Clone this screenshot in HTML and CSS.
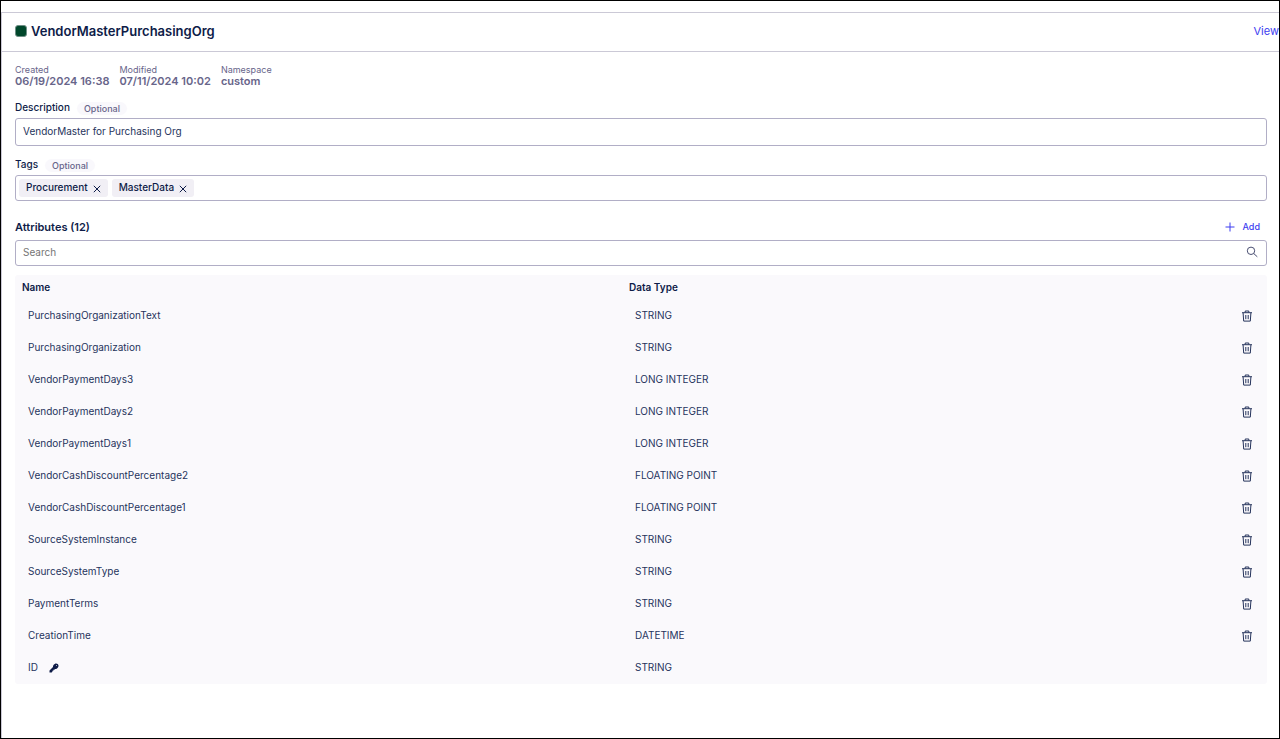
FILE: index.html
```html
<!DOCTYPE html>
<html lang="en">
<head>
<meta charset="utf-8">
<title>VendorMasterPurchasingOrg</title>
<link rel="stylesheet" href="styles.css">
</head>
<body>
<svg class="sprite" aria-hidden="true">
  <symbol id="trash" viewBox="0 0 12 12"><path d="M1 2.700h10M4.200 2.500V1h3.600v1.500M2.100 3l.6 8.100h6.600l.6-8.100M4.800 5v4.200M7.200 5v4.200"/></symbol>
  <symbol id="cross" viewBox="0 0 8 8"><path d="M.8.8l6.400 6.400M7.200.8L.8 7.200"/></symbol>
</svg>
<main class="panel">
  <header class="topbar">
    <span class="swatch"></span>
    <h1 class="title">VendorMasterPurchasingOrg</h1>
    <a class="view" href="#">View</a>
  </header>
  <div class="content">
    <dl class="meta">
      <div><dt>Created</dt><dd>06/19/2024 16:38</dd></div>
      <div><dt>Modified</dt><dd>07/11/2024 10:02</dd></div>
      <div><dt>Namespace</dt><dd>custom</dd></div>
    </dl>
    <div class="field-head"><label for="description">Description</label><span class="optional">Optional</span></div>
    <input class="box description" id="description" type="text" value="VendorMaster for Purchasing Org">
    <div class="field-head"><label for="tags">Tags</label><span class="optional">Optional</span></div>
    <div class="box tags">
      <span class="tag">Procurement<button class="remove" type="button" aria-label="Remove Procurement"><svg><use href="#cross"/></svg></button></span>
      <span class="tag">MasterData<button class="remove" type="button" aria-label="Remove MasterData"><svg><use href="#cross"/></svg></button></span>
      <input class="tag-input" id="tags" type="text">
    </div>
    <div class="attributes-head">
      <h2 class="subtitle">Attributes (12)</h2>
      <button class="add" type="button"><svg viewBox="0 0 10 10"><path d="M5 .5v9M.5 5h9"/></svg>Add</button>
    </div>
    <div class="box search">
      <input type="search" placeholder="Search" aria-label="Search attributes">
      <svg viewBox="0 0 12 12"><circle cx="5" cy="4.800" r="3.700"/><path d="M7.700 7.500l3.600 3.300"/></svg>
    </div>
    <table class="attributes">
      <thead><tr><th>Name</th><th>Data Type</th><th class="action"></th></tr></thead>
      <tbody>
        <tr><td>PurchasingOrganizationText</td><td>STRING</td><td><button class="delete" type="button" aria-label="Delete"><svg><use href="#trash"/></svg></button></td></tr>
        <tr><td>PurchasingOrganization</td><td>STRING</td><td><button class="delete" type="button" aria-label="Delete"><svg><use href="#trash"/></svg></button></td></tr>
        <tr><td>VendorPaymentDays3</td><td>LONG INTEGER</td><td><button class="delete" type="button" aria-label="Delete"><svg><use href="#trash"/></svg></button></td></tr>
        <tr><td>VendorPaymentDays2</td><td>LONG INTEGER</td><td><button class="delete" type="button" aria-label="Delete"><svg><use href="#trash"/></svg></button></td></tr>
        <tr><td>VendorPaymentDays1</td><td>LONG INTEGER</td><td><button class="delete" type="button" aria-label="Delete"><svg><use href="#trash"/></svg></button></td></tr>
        <tr><td>VendorCashDiscountPercentage2</td><td>FLOATING POINT</td><td><button class="delete" type="button" aria-label="Delete"><svg><use href="#trash"/></svg></button></td></tr>
        <tr><td>VendorCashDiscountPercentage1</td><td>FLOATING POINT</td><td><button class="delete" type="button" aria-label="Delete"><svg><use href="#trash"/></svg></button></td></tr>
        <tr><td>SourceSystemInstance</td><td>STRING</td><td><button class="delete" type="button" aria-label="Delete"><svg><use href="#trash"/></svg></button></td></tr>
        <tr><td>SourceSystemType</td><td>STRING</td><td><button class="delete" type="button" aria-label="Delete"><svg><use href="#trash"/></svg></button></td></tr>
        <tr><td>PaymentTerms</td><td>STRING</td><td><button class="delete" type="button" aria-label="Delete"><svg><use href="#trash"/></svg></button></td></tr>
        <tr><td>CreationTime</td><td>DATETIME</td><td><button class="delete" type="button" aria-label="Delete"><svg><use href="#trash"/></svg></button></td></tr>
        <tr><td>ID<svg class="key" viewBox="0 0 10 10"><path fill-rule="evenodd" d="M5.800.9C7.200 0 9.300.7 9.500 2.500 9.700 4.400 8 6.200 6.200 5.900L5.300 6.800H4.400V7.800H3.400V8.700L2.600 9.400H.5V7.500L4 4.100C3.800 2.700 4.600 1.500 5.800.9ZM7.400 2.100a.4.4 0 1 0 .1 0Z"/></svg></td><td>STRING</td><td></td></tr>
      </tbody>
    </table>
  </div>
</main>
</body>
</html>
```
FILE: styles.css
```css
* { box-sizing: border-box; }
body {
  margin: 0;
  min-height: 100vh;
  display: flex;
  padding-top: 11px;
  border: 1px solid #000;
  background: #fff;
  color: #0e1c48;
  font: 10px/14px Inter, sans-serif;
  overflow-x: hidden;
}
button, input { font: inherit; color: inherit; border: 0; padding: 0; background: none; }
input { outline: 0; min-width: 0; }
button { cursor: pointer; }
svg { fill: none; stroke: currentColor; }
.sprite { position: absolute; width: 0; height: 0; }
.panel { flex: 1; min-width: 0; border-top: 1px solid #cbc9d6; border-left: 1px solid #cbc9d6; }
.topbar {
  display: flex;
  align-items: center;
  height: 39px;
  padding: 0 0 2px 13px;
  border-bottom: 1px solid #cbc9d6;
}
.swatch { width: 12px; height: 12px; border: 1px solid #6f8f86; border-radius: 3px; background: #00472b; }
.title { margin: 0 0 0 4px; font-size: 13px; line-height: 18px; font-weight: 600; }
.view { margin-left: auto; color: #3d3df0; font-size: 11px; text-decoration: none; }
.content { padding: 13px 12px 20px 13px; }
.meta { display: flex; gap: 10px; margin: 0 0 13px; color: #68658a; }
.meta dt { font-size: 9px; line-height: 10px; }
.meta dd { margin: 0; font-size: 11px; line-height: 12px; font-weight: 600; }
.field-head { display: flex; align-items: center; gap: 7px; height: 14px; margin-bottom: 4px; font-weight: 500; }
.optional { margin-top: 2px; padding: 0 7px; border-radius: 7px; background: #f9f8fc; color: #68658a; font-size: 9px; line-height: 13px; }
.box { width: 100%; border: 1px solid #b1aec6; border-radius: 3px; background: #fff; }
.description { height: 28px; margin-bottom: 11px; padding: 0 7px 2px; color: #26345c; }
.tags { display: flex; gap: 4px; height: 26px; padding: 3px; }
.tag { display: flex; align-items: center; gap: 5px; padding: 0 7px 2px; border-radius: 3px; background: #f1eff5; font-weight: 500; line-height: 16px; }
.remove { display: flex; padding-top: 3px; }
.remove svg { width: 8px; height: 8px; }
.tag-input { flex: 1; }
.attributes-head { display: flex; align-items: center; justify-content: space-between; height: 20px; margin: 16px 0 3px; padding-right: 7px; }
.subtitle { margin: 0; font-size: 11px; line-height: 14px; font-weight: 600; }
.add { display: flex; align-items: center; gap: 8px; color: #3d3df0; font-size: 9px; font-weight: 500; }
.add svg { width: 10px; height: 10px; }
.search { display: flex; align-items: center; height: 26px; margin-bottom: 9px; padding: 0 8px 2px 7px; }
.search input { flex: 1; appearance: none; }
.search input::placeholder { color: #757575; opacity: 1; }
.search svg { width: 12px; height: 12px; color: #4a4f72; }
.attributes { width: 100%; table-layout: fixed; border-spacing: 0; border-radius: 3px; background: #faf9fc; }
.attributes th { height: 25px; padding: 0 7px 2px; text-align: left; font-weight: 600; }
.attributes .action { width: 38px; }
.attributes td { height: 32px; padding: 0 13px 2px; color: #26345c; }
.attributes td:last-child { padding: 0 14px 0 0; }
.delete { display: block; margin-left: auto; }
.delete svg { display: block; width: 12px; height: 12px; }
.key { width: 10px; height: 10px; margin-left: 11px; vertical-align: -2px; fill: #0e1c48; stroke: none; }
```
